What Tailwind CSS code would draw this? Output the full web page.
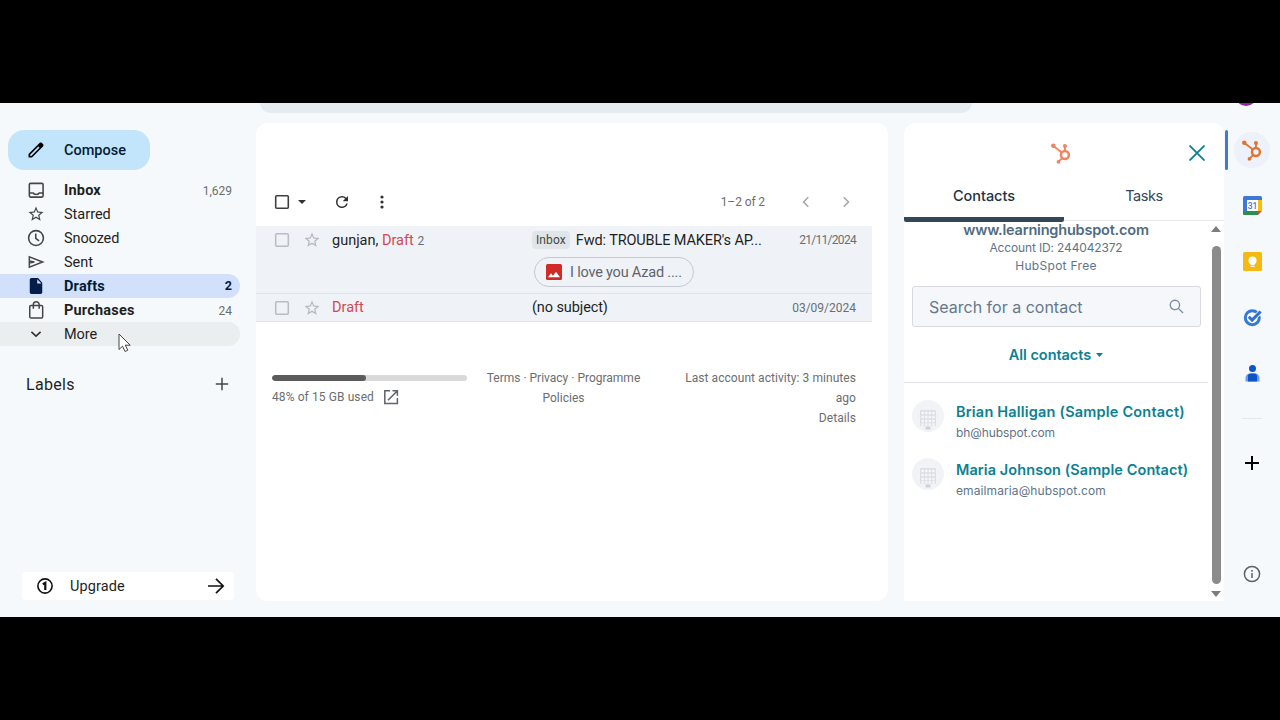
<!DOCTYPE html>
<html lang="en">
<head>
  <meta charset="UTF-8">
  <title>Drafts</title>
  <meta name="viewport" content="width=device-width, initial-scale=1.0" />
  <script src="https://cdn.jsdelivr.net/npm/@tailwindcss/browser@4"></script>
</head>
<body class="bg-black h-[720px] w-[1280px] overflow-hidden pt-[103px] font-[Roboto,'Liberation_Sans',sans-serif] text-[#1f1f1f]">
  <!-- Shared icons -->
  <svg class="hidden">
    <symbol id="star" viewBox="0 0 24 24">
      <path fill="currentColor" d="M22 9.24l-7.19-.62L12 2 9.19 8.63 2 9.24l5.46 4.73L5.82 21 12 17.27 18.18 21l-1.63-7.03L22 9.24zM12 15.4l-3.76 2.27 1-4.28-3.32-2.88 4.38-.38L12 6.1l1.71 4.04 4.38.38-3.32 2.88 1 4.28L12 15.4z"/>
    </symbol>
    <symbol id="sprocket" viewBox="0 0 24 24">
      <g fill="none" stroke="currentColor">
        <circle cx="16.3" cy="14.2" r="4.3" stroke-width="2.7"/>
        <path stroke-width="2" d="M16.3 10V4.5M12.9 11.4L3.8 4.3M13.2 17.5l-3.7 3.7"/>
      </g>
      <g fill="currentColor">
        <circle cx="16.3" cy="4.3" r="2.2"/>
        <circle cx="3.6" cy="4" r="2.5"/>
        <circle cx="9.2" cy="21.600" r="2"/>
      </g>
    </symbol>
    <symbol id="building" viewBox="0 0 32 32">
      <rect x="8" y="10" width="16" height="16" rx="1" fill="#dddfe5"/>
      <path d="M9.500 13h13.500M9.500 17h13.500M9.500 21h13.500M9.500 24.500h13.500" stroke="#f8f8fa" stroke-width="2.300" stroke-dasharray="2.300 1.300"/>
      <path d="M13.500 26.500h5v3h-5z" fill="#cfd1d7"/>
    </symbol>
  </svg>

  <div class="h-[514px] bg-[#f6f9fb] flex flex-col overflow-hidden">
    <!-- Top bar -->
    <header class="h-5 flex items-start">
      <div class="ml-[260px] w-[712px] h-[10px] rounded-b-[14px] bg-[#e6ebf0]"></div>
      <div class="ml-[263px] -mt-[19px] size-[22px] rounded-full bg-[#8e24aa]"></div>
    </header>

    <div class="flex h-[494px]">
      <!-- Sidebar -->
      <aside class="w-64 shrink-0 pt-[7px] flex flex-col text-[14.5px]">
        <button class="ml-2 w-[142px] h-10 rounded-[16px] bg-[#c2e5fc] flex items-center pl-[18px] gap-[18px] text-[#001d35] text-[14.5px] font-medium">
          <svg class="size-5" viewBox="0 0 24 24"><path fill="#000" d="M20.410 4.940l-1.350-1.350c-.78-.78-2.050-.78-2.830 0L3 16.820V21h4.180L20.410 7.770c.79-.78.79-2.050 0-2.830zm-14 14.120L5 19v-1.360l9.820-9.820 1.410 1.410-9.820 9.830z"/></svg>
          <span class="pt-px">Compose</span>
        </button>

        <nav class="mt-2 w-60">
          <a class="flex items-center h-6 pl-[26px] pr-2">
            <svg class="size-5 mr-[18px]" viewBox="0 0 24 24" fill="none" stroke="#444746" stroke-width="1.900"><rect x="4" y="4" width="16.500" height="16.500" rx="1.500"/><path d="M4 15.500h4.500c1 2.500 6.500 2.500 7.500 0h4.500"/></svg>
            <span class="flex-1 pt-px font-bold tracking-[0.2px]">Inbox</span>
            <span class="pt-px text-[12px] text-[#6a6e71]">1,629</span>
          </a>
          <a class="flex items-center h-6 pl-[26px] pr-2">
            <svg class="size-[18px] ml-px mr-[19px] text-[#444746]"><use href="#star"/></svg>
            <span class="pt-px">Starred</span>
          </a>
          <a class="flex items-center h-6 pl-[26px] pr-2">
            <svg class="size-5 mr-[18px]" viewBox="0 0 24 24" fill="none" stroke="#444746" stroke-width="1.900"><circle cx="12" cy="12" r="8.900"/><path d="M11.700 6.500v6l4 3"/></svg>
            <span class="pt-px tracking-[-0.1px]">Snoozed</span>
          </a>
          <a class="flex items-center h-6 pl-[26px] pr-2">
            <svg class="size-5 mr-[18px]" viewBox="0 0 24 24" fill="none" stroke="#444746" stroke-width="1.800"><path d="M4 5.800v12.400L20 12 4 5.800zM4 10.700l6 1.300-6 1.300"/></svg>
            <span class="pt-px">Sent</span>
          </a>
          <a class="flex items-center h-6 pl-[26px] pr-2 rounded-r-full bg-[#d3e0fb] text-[#001d35] font-bold">
            <svg class="size-5 mr-[18px]" viewBox="0 0 24 24"><path fill="#041e49" d="M14.500 2.500H6.500c-1.100 0-2 .9-2 2v15c0 1.100.9 2 2 2h11c1.100 0 2-.9 2-2V8l-5-5.500zM13.500 9V4l5 5h-5z"/></svg>
            <span class="flex-1 pt-px tracking-[0.2px]">Drafts</span>
            <span class="pt-px text-[12.500px]">2</span>
          </a>
          <a class="flex items-center h-6 pl-[26px] pr-2">
            <svg class="size-5 mr-[18px]" viewBox="0 0 24 24" fill="none" stroke="#444746" stroke-width="1.800"><rect x="4.500" y="6.500" width="15.500" height="15" rx="1.500"/><path d="M8.800 10.500V5.500a3.500 3.500 0 0 1 7 0v5"/></svg>
            <span class="flex-1 pt-px font-bold tracking-[0.2px]">Purchases</span>
            <span class="pt-px text-[12px] text-[#6a6e71]">24</span>
          </a>
          <a class="relative flex items-center h-6 pl-[26px] pr-2 rounded-r-full bg-[#ebeeef]">
            <svg class="size-5 mr-[18px]" viewBox="0 0 24 24" fill="none" stroke="#303030" stroke-width="1.900"><path d="M6.500 9.500l5.500 5 5.500-5"/></svg>
            <span class="pt-px tracking-[-0.1px]">More</span>
            <!-- Mouse pointer -->
            <svg class="absolute left-[118px] top-[11px] w-[14px] h-[20px]" viewBox="0 0 14 20"><path d="M1 1v15.500l3.500-3.300 2.600 5.300 2.700-1.300-2.500-5h4.900z" fill="#fff" stroke="#444" stroke-width="1"/></svg>
          </a>
        </nav>

        <div class="mt-[26px] h-6 w-60 flex items-center justify-between pl-[26px] pr-[11px] text-base tracking-[0.3px]">
          <span class="pt-px">Labels</span>
          <svg class="size-[14px]" viewBox="0 0 14 14" stroke="#444746" stroke-width="1.500"><path d="M7 .8v12.400M.8 7h12.400"/></svg>
        </div>

        <div class="mt-[176px] ml-[22px] w-[212px] h-7 rounded bg-white flex items-center pl-[14px] pr-[9px]">
          <svg class="size-[18px] mr-4" viewBox="0 0 18 18" fill="none" stroke="#111"><circle cx="9" cy="9" r="7.100" stroke-width="1.600"/><path stroke-width="2.200" d="M6.800 7.300L9.300 5.900v7"/></svg>
          <span class="flex-1 pt-px tracking-[0.1px]">Upgrade</span>
          <svg class="size-[18px]" viewBox="0 0 18 18" fill="none" stroke="#111" stroke-width="1.700"><path d="M1 9h15M9 1.800L16.200 9 9 16.200"/></svg>
        </div>
      </aside>

      <!-- Message list -->
      <main class="w-[632px] h-[478px] shrink-0 rounded-xl bg-white pt-[67px]">
        <div class="h-6 flex items-center pl-[18px] pr-[34px]">
          <svg class="size-4" viewBox="0 0 16 16" fill="none"><rect x="1.700" y="1.700" width="12.600" height="12.600" rx="1" stroke="#3c4043" stroke-width="1.600"/></svg>
          <svg class="ml-2 w-2 h-1" viewBox="0 0 8 4"><path d="M0 0h8L4 4z" fill="#303030"/></svg>
          <svg class="ml-[27px] size-[18px]" viewBox="0 0 24 24"><path fill="#303030" d="M17.650 6.350A7.960 7.960 0 0 0 12 4a8 8 0 1 0 7.730 10h-2.080A6 6 0 1 1 12 6c1.660 0 3.140.69 4.220 1.780L13 11h7V4l-2.350 2.350z"/></svg>
          <svg class="ml-[21px] size-5" viewBox="0 0 20 20" fill="#303030"><circle cx="10" cy="5" r="1.600"/><circle cx="10" cy="10" r="1.600"/><circle cx="10" cy="15" r="1.600"/></svg>
          <span class="ml-auto mr-[37px] text-[12px] tracking-[-0.1px] text-[#6a6e71]">1–2 of 2</span>
          <svg class="w-2 h-3 mr-[32px]" viewBox="0 0 8 12" fill="none" stroke="#a3a6a8" stroke-width="1.500"><path d="M6.300 1.200L1.500 6l4.800 4.800"/></svg>
          <svg class="w-2 h-3 mr-1" viewBox="0 0 8 12" fill="none" stroke="#a3a6a8" stroke-width="1.500"><path d="M1.700 1.200L6.500 6l-4.800 4.800"/></svg>
        </div>

        <div class="mt-3 w-[616px] bg-[#eff3f8] text-[14.5px]">
          <div class="h-[68px] border-b border-[#e0e5ea] flex items-start pl-[18px] pr-4">
            <svg class="size-4 mt-[6px]" viewBox="0 0 16 16" fill="none"><rect x="1.700" y="1.700" width="12.600" height="12.600" rx="1" stroke="#b9bcc1" stroke-width="1.500"/></svg>
            <svg class="size-[18px] mt-[5px] ml-[13px] text-[#b4b7bc]"><use href="#star"/></svg>
            <div class="ml-[11px] w-[200px] h-7 leading-[29px]">gunjan, <span class="text-[#d04a50]">Draft</span> <span class="text-[12px] text-[#6a6e71]">2</span></div>
            <div class="flex-1">
              <div class="h-7 flex items-center">
                <span class="rounded bg-[#e1e5e8] px-1 text-[12px] leading-[18px] tracking-[0.1px] text-[#444746]">Inbox</span>
                <span class="ml-[6px] pt-px whitespace-nowrap tracking-[-0.12px]">Fwd: TROUBLE MAKER's AP...</span>
              </div>
              <div class="mt-[3px] ml-[2px] w-40 h-[30px] rounded-full border border-[#c7cad0] flex items-center pl-[11px] tracking-[-0.2px] text-[#5f6368]">
                <svg class="size-4 mr-2" viewBox="0 0 16 16"><rect width="16" height="16" rx="1.500" fill="#d02b27"/><path fill="#fff" d="M2 13.200l3-4 2 2.500 3-3.900 4 5.400z"/></svg>
                <span class="pt-px">I love you Azad ....</span>
              </div>
            </div>
            <span class="leading-[29px] text-[12px] tracking-[-0.7px] text-[#6a6e71]">21/11/2024</span>
          </div>
          <div class="h-7 border-b border-[#dfe4e9] flex items-center pl-[18px] pr-4">
            <svg class="size-4" viewBox="0 0 16 16" fill="none"><rect x="1.700" y="1.700" width="12.600" height="12.600" rx="1" stroke="#b9bcc1" stroke-width="1.500"/></svg>
            <svg class="size-[18px] ml-[13px] text-[#b4b7bc]"><use href="#star"/></svg>
            <span class="ml-[11px] w-[200px] pt-px text-[#d04a50]">Draft</span>
            <span class="flex-1 pt-px tracking-[-0.1px]">(no subject)</span>
            <span class="pt-px text-[12px] text-[#6a6e71]">03/09/2024</span>
          </div>
        </div>

        <footer class="mt-[45px] ml-4 w-[584px] flex text-[12px] leading-[20px] text-[#6a6e71]">
          <div class="w-[195px] pt-2">
            <div class="h-[6px] rounded-full bg-[#d9d9d9] overflow-hidden">
              <div class="h-full rounded-full bg-[#5c5c5c]" style="width: 48%"></div>
            </div>
            <div class="mt-[6px] flex items-center tracking-[0.1px]">
              48% of 15 GB used
              <svg class="ml-[9px] size-4" viewBox="0 0 16 16" fill="none" stroke="#5f6368" stroke-width="1.500"><path d="M7 1.800H1.800v12.600h12.600V9M9.500 1.800h4.900v4.900M14.200 2L5 11.200"/></svg>
            </div>
          </div>
          <div class="ml-4 w-[161px] pt-px text-center">Terms · Privacy · Programme<br>Policies</div>
          <div class="ml-auto pt-px text-right whitespace-nowrap tracking-[0.06px]">Last account activity: 3 minutes<br>ago<br>Details</div>
        </footer>
      </main>

      <!-- HubSpot panel -->
      <section class="ml-4 w-80 h-[478px] shrink-0 bg-white rounded-t-xl font-[Inter,'Liberation_Sans',sans-serif] text-[#5f7488]">
        <div class="h-[60px] flex items-center pl-[146px] pr-[19px] justify-between">
          <svg class="size-[22px] text-[#ee8460]"><use href="#sprocket"/></svg>
          <svg class="size-4" viewBox="0 0 16 16" stroke="#0a8193" stroke-width="1.800"><path d="M.5.500l15 15M15.500.500l-15 15"/></svg>
        </div>
        <div class="grid grid-cols-2 h-[38px] text-center text-[14.5px] border-b border-[#e6e8ec]">
          <div class="h-[39px] pt-px leading-6 font-medium tracking-[-0.05px] text-[#213343] border-b-[5px] border-[#33475b] rounded-b-xs">Contacts</div>
          <div class="pt-px leading-6 tracking-[-0.4px] text-[#33475b]">Tasks</div>
        </div>
        <div class="flex">
          <div class="w-[304px]">
            <div class="text-center text-[12px] leading-[18px]">
              <div class="text-[14.5px] leading-[18px] tracking-[-0.2px] font-semibold text-[#4f6b80]">www.learninghubspot.com</div>
              <div class="tracking-[-0.15px]">Account ID: 244042372</div>
              <div class="tracking-[0.3px]">HubSpot Free</div>
            </div>
            <div class="ml-2 mt-[11px] w-[289px] h-[41px] rounded-[3px] border border-[#d8dae0] bg-[#f5f7fa] flex items-center justify-between pl-4 pr-4 text-base text-[#66788a]">
              <span>Search for a contact</span>
              <svg class="size-[15px]" viewBox="0 0 16 16" fill="none" stroke="#7c8ba3" stroke-width="1.400"><circle cx="6.300" cy="6.300" r="5"/><path d="M10 10l5 5"/></svg>
            </div>
            <div class="h-14 flex items-center justify-center gap-[5px] text-[14.5px] font-semibold tracking-[-0.05px] text-[#0a8193] border-b border-[#dfe1e6]">
              All contacts
              <svg class="w-[7px] h-1" viewBox="0 0 7 4"><path d="M0 0h7L3.500 4z" fill="#0a8193"/></svg>
            </div>
            <div class="pt-[17px] pl-2 whitespace-nowrap">
              <div class="h-[58px] flex gap-3">
                <svg class="size-8 rounded-full bg-[#f2f3f6]"><use href="#building"/></svg>
                <div>
                  <div class="mt-[2px] text-[14.5px] leading-5 tracking-[0.2px] font-semibold text-[#0a8193]">Brian Halligan (Sample Contact)</div>
                  <div class="mt-px text-[12px] leading-5 tracking-[-0.1px]">bh@hubspot.com</div>
                </div>
              </div>
              <div class="h-[58px] flex gap-3">
                <svg class="size-8 rounded-full bg-[#f2f3f6]"><use href="#building"/></svg>
                <div>
                  <div class="mt-[2px] text-[14.5px] leading-5 tracking-[0.08px] font-semibold text-[#0a8193]">Maria Johnson (Sample Contact)</div>
                  <div class="mt-px text-[12px] leading-5 tracking-[0.1px]">emailmaria@hubspot.com</div>
                </div>
              </div>
            </div>
          </div>
          <!-- Scrollbar -->
          <div class="w-4 pl-px pt-[5px] pr-px flex flex-col items-center">
            <svg class="w-[10px] h-[6px]" viewBox="0 0 10 6"><path d="M0 6h10L5 0z" fill="#7d7d7d"/></svg>
            <div class="mt-[14px] w-[9px] h-[338px] rounded-full bg-[#8b8b8b]"></div>
            <svg class="mt-[7px] w-[10px] h-[6px]" viewBox="0 0 10 6"><path d="M0 0h10L5 6z" fill="#7d7d7d"/></svg>
          </div>
        </div>
      </section>

      <!-- Add-on rail -->
      <aside class="relative w-14 shrink-0 flex flex-col items-center pt-[9px]">
        <div class="absolute left-px top-[7px] w-[3px] h-10 bg-[#3f7bd0] rounded-xs"></div>
        <div class="size-[36px] rounded-full bg-[#edf1fa] flex items-center justify-center">
          <svg class="size-[22px] text-[#e07433]"><use href="#sprocket"/></svg>
        </div>
        <svg class="mt-[28px] size-[19px]" viewBox="0 0 19 19">
          <rect x="0" y="0" width="19" height="19" rx="1.500" fill="#3c78d8"/>
          <path d="M15 4h4v11h-4z" fill="#fbbc04"/>
          <path d="M0 15h15v4H1.500A1.500 1.500 0 0 1 0 17.500z" fill="#2c8f4b"/>
          <path d="M15 15h4l-4 4z" fill="#ea4335"/>
          <path d="M19 15v4h-4z" fill="#f6f9fb"/>
          <path d="M4 4h11v11H4z" fill="#fff"/>
          <text x="9.500" y="12.700" text-anchor="middle" font-size="8.500" font-weight="500" fill="#3c78d8">31</text>
        </svg>
        <svg class="mt-[37px] size-[19px]" viewBox="0 0 19 19">
          <rect width="19" height="19" rx="1.500" fill="#f5b912"/>
          <circle cx="9.500" cy="8.500" r="4" fill="#fff"/><path d="M7.500 11h4v2h-4zM7.500 13.700h4v1.300h-4z" fill="#fff"/>
        </svg>
        <svg class="mt-[37px] size-[19px]" viewBox="0 0 19 19" fill="none">
          <circle cx="9.300" cy="9.700" r="7" stroke="#3578d6" stroke-width="3"/>
          <path d="M5.800 8.800l3.300 3.300 8.300-8.300" stroke="#f6f9fb" stroke-width="4.500"/>
          <path d="M5.800 8.800l3.300 3.300 8.500-8.600" stroke="#2f6fd0" stroke-width="3"/>
        </svg>
        <svg class="mt-[37px] size-[19px]" viewBox="0 0 19 19">
          <circle cx="9.500" cy="4.500" r="3.500" fill="#0b55c4"/>
          <path d="M2.500 17.500v-3.500a4.500 4.500 0 0 1 4.500-4.500h5a4.500 4.500 0 0 1 4.500 4.500v3.500z" fill="#6d9bf0"/>
          <path d="M5 17.500V12a2.500 2.500 0 0 1 2.500-2.500h4A2.500 2.500 0 0 1 14 12v5.500z" fill="#0b55c4"/>
        </svg>
        <div class="mt-[35px] w-5 h-px bg-[#e3e7ea]"></div>
        <svg class="mt-[37px] size-[14px]" viewBox="0 0 14 14" stroke="#000" stroke-width="2"><path d="M7 0v14M0 7h14"/></svg>
        <svg class="mt-[95px] size-[18px]" viewBox="0 0 18 18" fill="none" stroke="#5f6368" stroke-width="1.500"><circle cx="9" cy="9" r="7.600"/><path d="M9 8v5M9 5v1.700"/></svg>
      </aside>
    </div>
  </div>
</body>
</html>
